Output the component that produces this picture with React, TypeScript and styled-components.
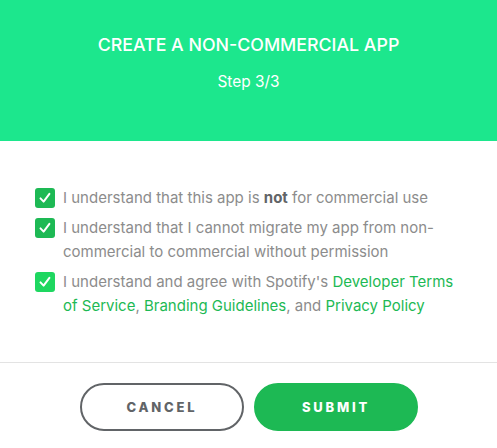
import styled, { createGlobalStyle } from "styled-components"

const GlobalStyle = createGlobalStyle`
  html, body {
    margin: 0;
    padding: 0;
    background: #ffffff;
  }
  body {
    font-family: Inter, "Liberation Sans", sans-serif;
  }
`

function Check({ hover }: { hover?: boolean }) {
  return (
    <Box $hover={hover}>
      <svg width="14" height="14" viewBox="0 0 14 14">
        <path
          d="M2.5 7.4 L5.6 10.6 L11.4 2.8"
          fill="none"
          stroke="#fff"
          strokeWidth="2"
          strokeLinecap="round"
          strokeLinejoin="round"
        />
      </svg>
    </Box>
  )
}

export default function App() {
  const items = [
    {
      key: "commercial",
      content: (
        <>
          I understand that this app is <b>not</b> for commercial use
        </>
      ),
    },
    {
      key: "migrate",
      content: (
        <>
          I understand that I cannot migrate my app from non-commercial to
          commercial without permission
        </>
      ),
    },
    {
      key: "terms",
      hover: true,
      content: (
        <>
          I understand and agree with Spotify's{" "}
          <Link href="#">Developer Terms of Service</Link>,{" "}
          <Link href="#">Branding Guidelines</Link>, and{" "}
          <Link href="#">Privacy Policy</Link>
        </>
      ),
    },
  ]

  return (
    <Wrapper>
      <GlobalStyle />
      <Header>
        <Title>CREATE A NON-COMMERCIAL APP</Title>
        <Step>Step 3/3</Step>
      </Header>
      <Body>
        <List>
          {items.map((item) => (
            <Item key={item.key}>
              <Check hover={item.hover} />
              <Label>{item.content}</Label>
            </Item>
          ))}
        </List>
      </Body>
      <Footer>
        <Button $variant="secondary">Cancel</Button>
        <Button $variant="primary">Submit</Button>
      </Footer>
    </Wrapper>
  )
}

const Wrapper = styled.div`
  width: 497px;
  height: 448px;
  display: flex;
  flex-direction: column;
  overflow: hidden;
`

const Header = styled.header`
  height: 141px;
  background: #1ce78d;
  display: flex;
  flex-direction: column;
  align-items: center;
  padding-top: 33px;
  box-sizing: border-box;
  color: #ffffff;
`

const Title = styled.h1`
  margin: 0;
  font-size: 17.8px;
  font-weight: 500;
  line-height: 24px;
`

const Step = styled.p`
  margin: 15px 0 0;
  font-size: 15.4px;
  line-height: 20px;
`

const Body = styled.div`
  height: 222px;
  box-sizing: border-box;
  border-bottom: 1px solid #e3e3e3;
  padding: 45px 35px 0 35px;
`

const List = styled.ul`
  margin: 0;
  padding: 0;
  list-style: none;
  display: flex;
  flex-direction: column;
  gap: 6px;
`

const Item = styled.li`
  display: flex;
  align-items: flex-start;
  gap: 8px;
`

const Box = styled.span<{ $hover?: boolean }>`
  flex: none;
  width: 20px;
  height: 20px;
  margin-top: 2px;
  border-radius: 3px;
  background: ${(p) => (p.$hover ? "#1ed760" : "#1db954")};
  display: flex;
  align-items: center;
  justify-content: center;
`

const Label = styled.span`
  font-size: 15px;
  line-height: 24px;
  color: #8c8c8c;

  b {
    color: #616467;
    font-weight: 700;
  }
`

const Link = styled.a`
  color: #1db954;
  text-decoration: none;
`

const Footer = styled.footer`
  flex: 1;
  display: flex;
  justify-content: center;
  align-items: flex-start;
  gap: 10px;
  padding-top: 20px;
  padding-left: 1px;
`

const Button = styled.button<{ $variant: "primary" | "secondary" }>`
  width: 164px;
  height: 48px;
  box-sizing: border-box;
  border-radius: 500px;
  font-family: Inter, "Liberation Sans", sans-serif;
  font-size: 13px;
  font-weight: 800;
  letter-spacing: 2.8px;
  text-transform: uppercase;
  cursor: pointer;
  border: 2px solid
    ${(p) => (p.$variant === "primary" ? "#1db954" : "#616467")};
  background: ${(p) => (p.$variant === "primary" ? "#1db954" : "#ffffff")};
  color: ${(p) => (p.$variant === "primary" ? "#ffffff" : "#616467")};
`
